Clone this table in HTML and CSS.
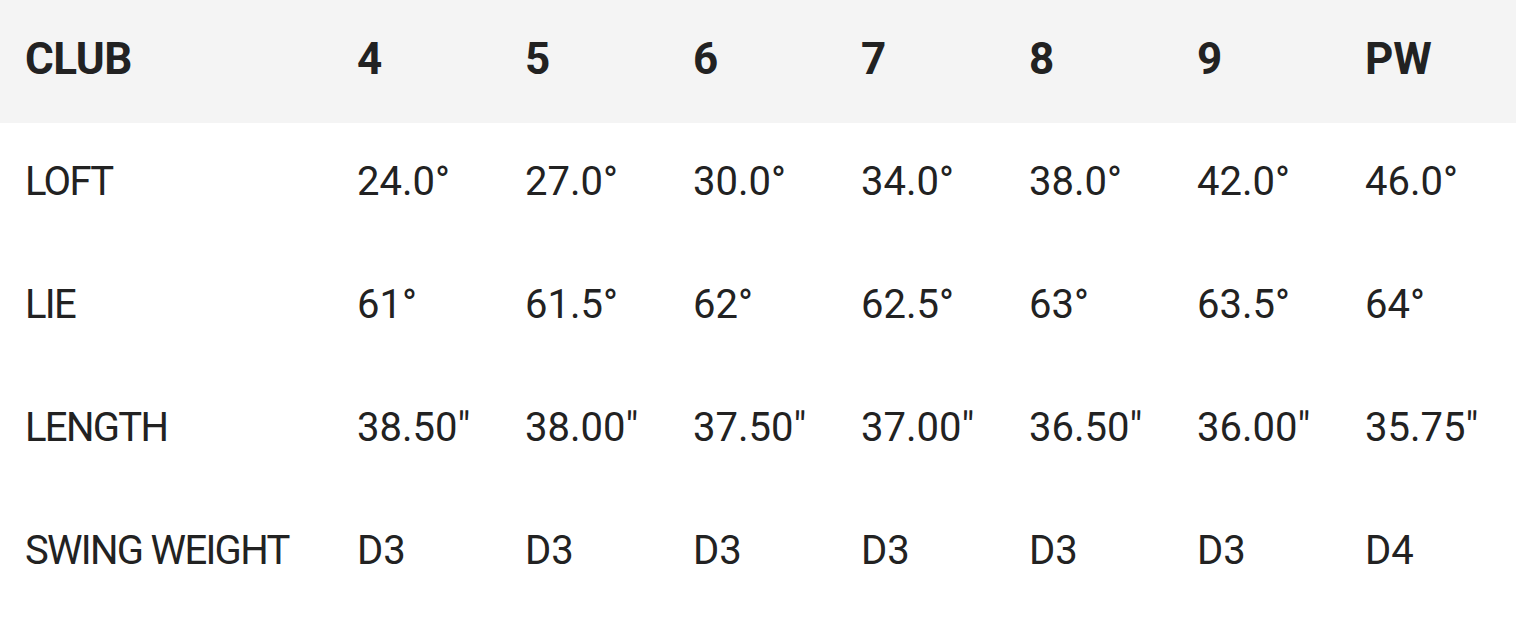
FILE: index.html
```html
<!DOCTYPE html>
<html lang="en">
<head>
<meta charset="utf-8">
<title>Club specifications</title>
<link rel="stylesheet" href="styles.css">
</head>
<body>
<div class="spec-table">
  <div class="row head">
    <div class="cell label">CLUB</div>
    <div class="cell">4</div>
    <div class="cell">5</div>
    <div class="cell">6</div>
    <div class="cell">7</div>
    <div class="cell">8</div>
    <div class="cell">9</div>
    <div class="cell">PW</div>
  </div>
  <div class="row">
    <div class="cell label">LOFT</div>
    <div class="cell">24.0°</div>
    <div class="cell">27.0°</div>
    <div class="cell">30.0°</div>
    <div class="cell">34.0°</div>
    <div class="cell">38.0°</div>
    <div class="cell">42.0°</div>
    <div class="cell">46.0°</div>
  </div>
  <div class="row">
    <div class="cell label">LIE</div>
    <div class="cell">61°</div>
    <div class="cell">61.5°</div>
    <div class="cell">62°</div>
    <div class="cell">62.5°</div>
    <div class="cell">63°</div>
    <div class="cell">63.5°</div>
    <div class="cell">64°</div>
  </div>
  <div class="row">
    <div class="cell label">LENGTH</div>
    <div class="cell">38.50"</div>
    <div class="cell">38.00"</div>
    <div class="cell">37.50"</div>
    <div class="cell">37.00"</div>
    <div class="cell">36.50"</div>
    <div class="cell">36.00"</div>
    <div class="cell">35.75"</div>
  </div>
  <div class="row">
    <div class="cell label">SWING WEIGHT</div>
    <div class="cell">D3</div>
    <div class="cell">D3</div>
    <div class="cell">D3</div>
    <div class="cell">D3</div>
    <div class="cell">D3</div>
    <div class="cell">D3</div>
    <div class="cell">D4</div>
  </div>
</div>
</body>
</html>
```

FILE: styles.css
```css
html, body {
  margin: 0;
  padding: 0;
  background: #ffffff;
}

body {
  font-family: Roboto, "Liberation Sans", sans-serif;
  color: #222222;
  width: 1516px;
  height: 624px;
  overflow: hidden;
}

.spec-table {
  display: flex;
  flex-direction: column;
}

.row {
  display: grid;
  grid-template-columns: 322px repeat(6, 168px) 1fr;
  height: 123px;
  align-items: center;
  font-size: 40px;
  font-weight: 400;
  padding-bottom: 5px;
  box-sizing: border-box;
}

.row.head {
  background: #f4f4f4;
  font-weight: 700;
  font-size: 44px;
  padding-bottom: 6px;
}

.cell {
  padding-left: 35px;
  white-space: nowrap;
  line-height: 1;
}

.cell.label {
  padding-left: 25px;
  letter-spacing: -1.7px;
}

.row.head .cell.label {
  letter-spacing: -0.5px;
}
```
